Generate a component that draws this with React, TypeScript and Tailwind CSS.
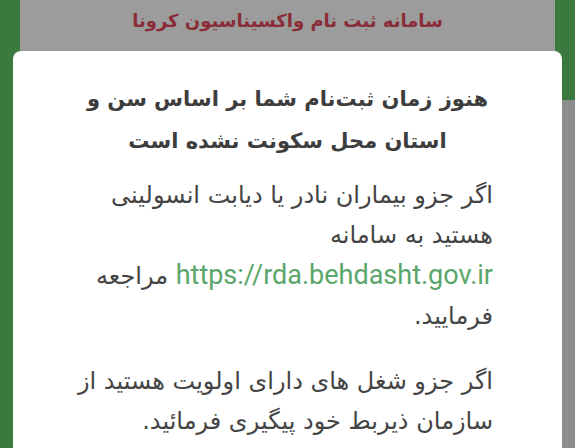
import React from "react";

const fa = { fontFamily: '"DejaVu Sans", sans-serif' };

export default function App() {
    return (
        <div dir="rtl" className="relative w-[575px] h-[448px] overflow-hidden bg-[#3a7a3f]" style={fa}>
            {/* dimmed strip at the right edge */}
            <div className="absolute right-0 top-[100px] bottom-0 w-[16px] bg-[#8d8d8d]" />
            <div className="ml-[20px] mr-[20px] h-[70px] bg-[#9c9c9c] flex justify-center pt-[8px]">
                <div className="text-[18px] font-bold text-[#8a2d38] leading-[26px]">
                    سامانه ثبت نام واکسیناسیون کرونا
                </div>
            </div>
            <div className="relative -mt-[19px] ml-[13px] mr-[13px] h-[420px] bg-white rounded-t-[8px]">
                <div className="pt-[27px] text-center text-[21px] font-bold text-[#3d3d3d] leading-[42px]">
                    <div>هنوز زمان ثبت‌نام شما بر اساس سن و</div>
                    <div>استان محل سکونت نشده است</div>
                </div>
                <div className="pr-[69px] mt-[13px] text-[24px] text-[#444444] leading-[40px] whitespace-nowrap">
                    <div>اگر جزو بیماران نادر یا دیابت انسولینی</div>
                    <div>هستید به سامانه</div>
                    <div>
                        <span className="text-[#5aa66a] text-[27px]" style={{ fontFamily: "Roboto, sans-serif" }}>
                            https://rda.behdasht.gov.ir
                        </span>{" "}
                        مراجعه
                    </div>
                    <div>فرمایید.</div>
                    <div className="mt-[25px]">اگر جزو شغل های دارای اولویت هستید از</div>
                    <div>سازمان ذیربط خود پیگیری فرمائید.</div>
                </div>
            </div>
        </div>
    );
}
